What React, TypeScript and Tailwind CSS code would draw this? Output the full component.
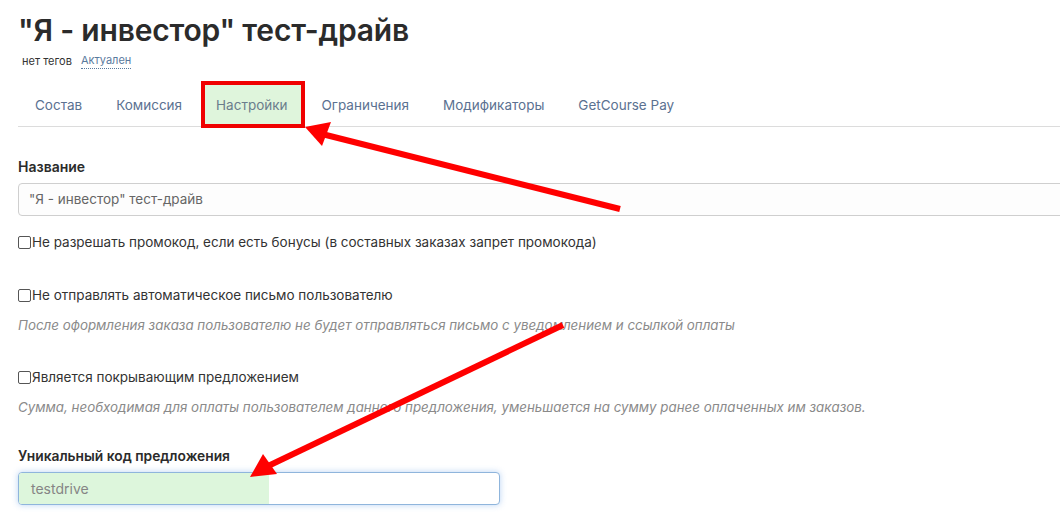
const font = { fontFamily: 'Inter, "Noto Sans", sans-serif' };

const tabs = ['Состав', 'Комиссия', 'Настройки', 'Ограничения', 'Модификаторы', 'GetCourse Pay'];

function Check({ label, hint }: { label: string; hint?: string }) {
    return (
        <div className="flex flex-col">
            <label className="flex items-center gap-[1px] text-[13.5px] text-[#333] leading-[20px]">
                <span className="w-[13px] h-[13px] border border-[#555] rounded-[2px] bg-white inline-block" />
                {label}
            </label>
            {hint && <p className="mt-[10px] text-[13.35px] italic text-[#8a8a8a] leading-[20px]">{hint}</p>}
        </div>
    );
}

export default function App() {
    return (
        <div className="relative w-[1060px] h-[526px] overflow-hidden bg-white" style={font}>
            <div className="pl-[18px] pt-[11px]">
                {/* Header */}
                <h1 className="text-[30px] font-semibold text-[#2b2b2b] leading-[38px] tracking-[-0.2px]">
                    "Я - инвестор" тест-драйв
                </h1>
                <div className="flex items-center gap-[9px] pl-[4px] mt-[3px] text-[11px] leading-[16px]">
                    <span className="text-[#333]">нет тегов</span>
                    <span className="text-[#5a7a9e] border-b border-dotted border-[#5a7a9e]">Актуален</span>
                </div>

                {/* Tabs */}
                <div className="mt-[12px] flex items-stretch h-[46px] border-b border-[#dcdcdc]">
                    {tabs.map((t, i) => (
                        <div
                            key={t}
                            className={
                                i === 2
                                    ? 'flex items-center pt-[2px] pl-[11px] pr-[13px] ml-[2px] -mb-[2px] bg-[#dff5dc] text-[#6b7d8c] text-[13.5px] border-[4px] border-[#f00000]'
                                    : 'flex items-center pt-[4px] px-[17px] text-[#5b7191] text-[13.5px]'
                            }
                        >
                            {t}
                        </div>
                    ))}
                </div>

                {/* Form */}
                <div className="mt-[31px] text-[14px] font-semibold text-[#2b2b2b] leading-[18px]">Название</div>
                <div className="mt-[7px] h-[33px] w-[1100px] border border-[#cfcfcf] rounded-[4px] bg-[#fdfdfd] flex items-center pl-[10px] text-[13.5px] text-[#666]">
                    "Я - инвестор" тест-драйв
                </div>

                <div className="mt-[16px]">
                    <Check label="Не разрешать промокод, если есть бонусы (в составных заказах запрет промокода)" />
                </div>
                <div className="mt-[33px]">
                    <Check
                        label="Не отправлять автоматическое письмо пользователю"
                        hint="После оформления заказа пользователю не будет отправляться письмо с уведомлением и ссылкой оплаты"
                    />
                </div>
                <div className="mt-[32px]">
                    <Check
                        label="Является покрывающим предложением"
                        hint="Сумма, необходимая для оплаты пользователем данного предложения, уменьшается на сумму ранее оплаченных им заказов."
                    />
                </div>

                <div className="mt-[30px] text-[13.8px] font-semibold text-[#2b2b2b] leading-[18px]">Уникальный код предложения</div>
                <div className="mt-[7px] h-[33px] w-[482px] border border-[#8fb5dc] rounded-[4px] bg-white shadow-[0_0_6px_rgba(102,160,230,0.45)] flex overflow-hidden">
                    <div className="w-[250px] bg-[#ddf6dc] flex items-center pl-[12px] text-[14px] text-[#858585]">testdrive</div>
                </div>
            </div>

            {/* Annotation arrows */}
            <svg className="absolute inset-0 pointer-events-none" width="1060" height="526">
                <line x1="620" y1="209" x2="322" y2="134" stroke="#ff0000" strokeWidth="6" />
                <polygon points="305,127 331,122 322,146" fill="#ff0000" />
                <line x1="563" y1="325" x2="266" y2="467" stroke="#ff0000" strokeWidth="6" />
                <polygon points="250,477 263,454 277,474" fill="#ff0000" />
            </svg>
        </div>
    );
}
